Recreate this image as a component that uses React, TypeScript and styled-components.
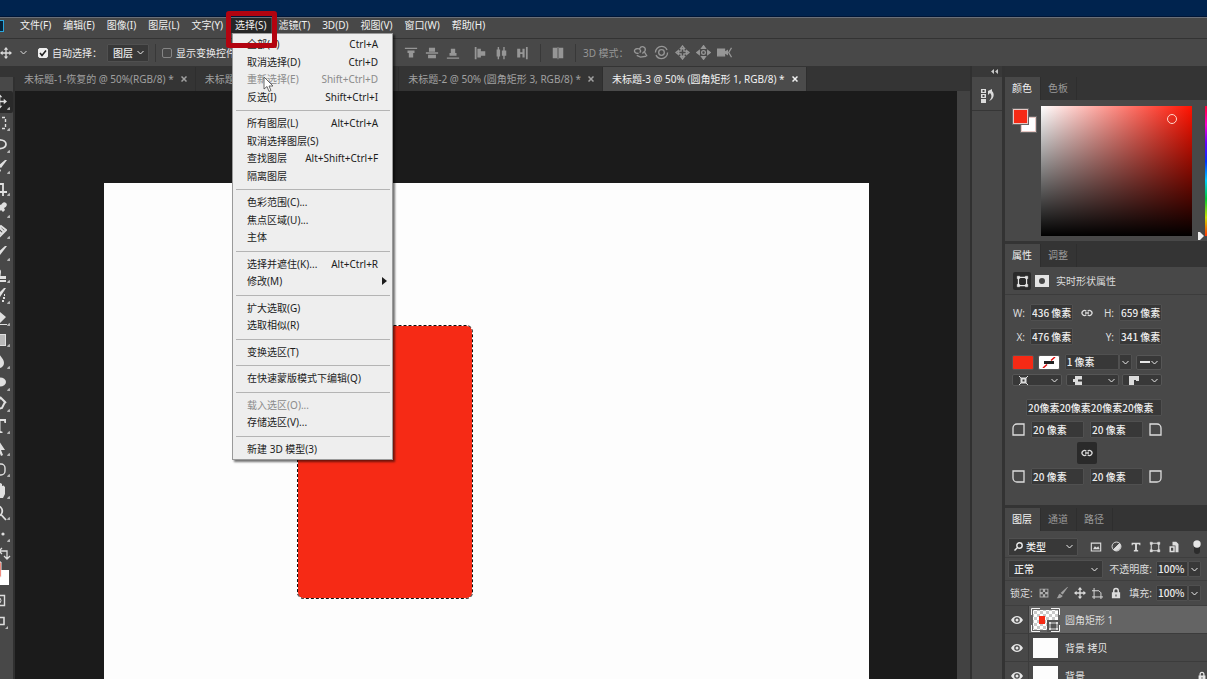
import React from "react";
import styled, { createGlobalStyle, css } from "styled-components";

const c = {
  panel: "#484848",
  strip: "#343434",
  field: "#383838",
  line: "#3a3a3a",
  text: "#dcdcdc",
  dim: "#969696",
  red: "#f62a15",
};

const GlobalStyle = createGlobalStyle`
  *, *::before, *::after { box-sizing: border-box; }
  html, body, #root { height: 100%; }
  body { margin: 0; overflow: hidden; background: #1b1b1b; }
  body, button, input, select {
    font-family: "Noto Sans", "Noto Sans CJK SC", sans-serif;
    font-size: 10px;
    line-height: 14px;
    color: ${c.text};
  }
  button, input, select { margin: 0; padding: 0; border: 0; background: none; border-radius: 0; outline: 0; }
  svg { display: block; flex: none; }
`;

const Window = styled.div`
  height: 100vh;
  display: flex;
  flex-direction: column;
  overflow: hidden;
  white-space: nowrap;
`;

const DesktopStrip = styled.div`
  flex: none;
  height: 17px;
  background: #00234e;
  border-bottom: 1px solid #001536;
`;

const MenuBar = styled.nav`
  flex: none;
  display: flex;
  align-items: flex-start;
  gap: 4px;
  height: 22px;
  padding-right: 8px;
  background: ${c.panel};
  border-top: 1px solid #6a6f78;
  border-bottom: 1px solid #333;
`;

const AppMark = styled.div`
  width: 12px;
  height: 16px;
  display: flex;
  align-items: center;
`;

const MenuEntry = styled.div`
  position: relative;
`;

const MenuTitle = styled.button<{ $open?: boolean }>`
  display: block;
  height: 15px;
  padding: 0 4px 2px;
  color: #f0f0f0;
  background: ${(p) => (p.$open ? "#262626" : "transparent")};
`;

const Highlight = styled.div`
  position: absolute;
  inset: -7px -6px -15px -5px;
  z-index: 12;
  border: 5px solid #b30410;
  border-radius: 3px;
  pointer-events: none;
`;

const Popup = styled.div`
  position: absolute;
  top: 100%;
  left: 1px;
  z-index: 10;
  width: 161px;
  height: 427px;
  display: flex;
  flex-direction: column;
  padding: 2px 1px 1px;
  background: #eeeeee;
  border: 1px solid #9a9a9a;
  box-shadow: 2px 2px 2px rgba(0, 0, 0, 0.55);
`;

const PopupRow = styled.button`
  flex: 1;
  min-height: 0;
  display: flex;
  align-items: center;
  justify-content: space-between;
  padding: 0 13px 1px;
  color: #1c1c1c;
  text-align: left;
  &:disabled { color: #8b8b8b; }
`;

const SubmenuRow = styled(PopupRow)`
  padding-right: 4px;
`;

const PopupRule = styled.hr`
  flex: none;
  width: 154px;
  height: 9px;
  margin: 0 auto;
  border: 0;
  background: linear-gradient(#b4b4b4, #b4b4b4) 0 4px / 100% 1px no-repeat;
`;

const OptionsBar = styled.div`
  flex: none;
  display: flex;
  align-items: center;
  height: 27px;
  background: ${c.panel};
`;

const OptionGroup = styled.div<{ $dim?: boolean; $gap?: number; $left?: number }>`
  display: flex;
  align-items: center;
  gap: ${(p) => p.$gap ?? 0}px;
  margin-left: ${(p) => p.$left ?? 0}px;
  color: ${(p) => (p.$dim ? c.dim : c.text)};
`;

const CheckLabel = styled.label`
  display: flex;
  align-items: center;
  gap: 4px;
  color: #ececec;
`;

const Check = styled.input`
  appearance: none;
  width: 10px;
  height: 10px;
  border: 1px solid #858585;
  border-radius: 2px;
  &:checked {
    border-color: #eee;
    background: #eee url("data:image/svg+xml,%3Csvg xmlns='http://www.w3.org/2000/svg' viewBox='0 0 8 8'%3E%3Cpath d='M1 4l2 2.500 4-5' fill='none' stroke='%23222' stroke-width='1.600'/%3E%3C/svg%3E");
  }
`;

const Divider = styled.span`
  width: 1px;
  height: 18px;
  background: #383838;
`;

const IconButton = styled.button<{ $w?: number; $h?: number; $on?: boolean }>`
  flex: none;
  display: flex;
  align-items: center;
  justify-content: center;
  width: ${(p) => p.$w ?? 20}px;
  height: ${(p) => p.$h ?? 20}px;
  color: inherit;
  border-radius: 2px;
  background: ${(p) => (p.$on ? "#2a2a2a" : "transparent")};
`;

const fieldLook = css`
  background: ${c.field};
  border: 1px solid #505050;
  border-radius: 1px;
  color: #ececec;
`;

const SelectBox = styled.div<{ $w: number; $h?: number }>`
  ${fieldLook}
  flex: none;
  display: flex;
  align-items: center;
  width: ${(p) => p.$w}px;
  height: ${(p) => p.$h ?? 18}px;
  padding: 0 4px 0 5px;
  select {
    flex: 1;
    min-width: 0;
    appearance: none;
    color: #ececec;
    font-weight: 500;
  }
`;

const Stepper = styled.button`
  ${fieldLook}
  display: flex;
  align-items: center;
  justify-content: center;
  width: 13px;
  height: 16px;
`;

const Workspace = styled.div`
  flex: 1;
  min-height: 0;
  display: flex;
  background: ${c.strip};
`;

const ToolRail = styled.div`
  flex: none;
  width: 15px;
  display: flex;
  flex-direction: column;
  align-items: flex-end;
  overflow: hidden;
  margin-top: 11px;
  padding: 14px 0 0;
  color: #e0e0e0;
  background: ${c.panel};
  border-right: 2px solid #303030;
`;

const ToolList = styled.div`
  flex: none;
  display: grid;
  grid-auto-rows: 1fr;
  width: 28px;
  height: 454px;
`;

const Tool = styled.button<{ $on?: boolean }>`
  display: flex;
  align-items: center;
  justify-content: center;
  padding-left: 3px;
  color: inherit;
  border-radius: 2px;
  background: ${(p) => (p.$on ? "#2a2a2a" : "transparent")};
  &::after {
    content: "";
    align-self: flex-end;
    margin-bottom: 3px;
    border: 2px solid;
    border-width: 1px 2px 2px 1px;
    border-color: transparent #b4b4b4 #b4b4b4 transparent;
  }
`;

const Editor = styled.main`
  flex: 1;
  min-width: 0;
  display: flex;
  flex-direction: column;
`;

const Tabs = styled.div`
  flex: none;
  display: flex;
  height: 25px;
  padding-top: 1px;
`;

const DocTab = styled.div<{ $active?: boolean }>`
  flex: none;
  display: flex;
  align-items: center;
  gap: 7px;
  padding: 0 7px 0 9px;
  color: ${(p) => (p.$active ? "#f2f2f2" : "#a0a0a0")};
  background: ${(p) => (p.$active ? "#4b4b4b" : "transparent")};
  border-right: 1px solid #2e2e2e;
`;

const EditorBody = styled.div`
  flex: 1;
  min-height: 0;
  display: flex;
`;

const Pasteboard = styled.div`
  flex: 1;
  display: flex;
  overflow: hidden;
  padding: 92px 88px 0 89px;
  background: #1b1b1b;
`;

const Artboard = styled.div`
  position: relative;
  flex: 1;
  background: #fdfdfd;
`;

const Shape = styled.svg`
  position: absolute;
  left: 193px;
  top: 142px;
`;

const ScrollTrack = styled.div`
  flex: none;
  width: 13px;
  background: #424242;
`;

const IconDock = styled.aside`
  flex: none;
  width: 32px;
  display: flex;
  flex-direction: column;
  border-left: 2px solid #303030;
  background: ${c.panel};
`;

const DockHandle = styled.div`
  flex: none;
  display: flex;
  justify-content: flex-end;
  align-items: center;
  height: 11px;
  padding-right: 4px;
  color: #c8c8c8;
  background: #383838;
`;

const DockItem = styled.div`
  display: flex;
  justify-content: center;
  height: 34px;
  padding-top: 9px;
  border-bottom: 1px solid #363636;
`;

const PanelColumn = styled.aside`
  flex: none;
  width: 205px;
  display: flex;
  flex-direction: column;
  overflow: hidden;
  padding-top: 11px;
  border-left: 3px solid #333;
  background: ${c.strip};
`;

const Panel = styled.section<{ $grow?: boolean }>`
  flex: ${(p) => (p.$grow ? "1 0 auto" : "none")};
  margin-bottom: 3px;
  background: ${c.panel};
`;

const PanelTabs = styled.div`
  display: flex;
  height: 23px;
  background: ${c.strip};
`;

const PanelTab = styled.button<{ $active?: boolean }>`
  padding: 0 8px 2px 7px;
  color: ${(p) => (p.$active ? "#f2f2f2" : "#9a9a9a")};
  background: ${(p) => (p.$active ? c.panel : "transparent")};
  border-right: 1px solid #2e2e2e;
`;

const ColorBody = styled.div`
  display: flex;
  height: 141px;
  padding: 6px 0 5px 8px;
`;

const Swatches = styled.div`
  flex: none;
  display: grid;
  grid-template: 8px 7px 8px / 8px 7px 8px;
  width: 28px;
  padding-top: 3px;
`;

const Swatch = styled.button<{ $color: string; $back?: boolean }>`
  grid-area: ${(p) => (p.$back ? "2 / 2 / 4 / 4" : "1 / 1 / 3 / 3")};
  z-index: ${(p) => (p.$back ? 0 : 1)};
  background: ${(p) => p.$color};
  border: 1px solid #e8c8c4;
  box-shadow: 0 0 0 1px #666;
`;

const Field = styled.div`
  position: relative;
  flex: none;
  width: 151px;
  background: linear-gradient(rgba(0, 0, 0, 0), #000), linear-gradient(90deg, #fff, #ff1200);
  &::after {
    content: "";
    position: absolute;
    left: 126px;
    top: 8px;
    width: 10px;
    height: 10px;
    border: 1px solid #ffd8cc;
    border-radius: 50%;
  }
`;

const HueSlider = styled.div`
  flex: none;
  display: flex;
  align-items: flex-end;
  margin-left: 6px;
  color: #f0f0f0;
  svg { margin-bottom: -4px; }
`;

const HueBar = styled.div`
  width: 14px;
  height: 100%;
  margin-left: 1px;
  background: linear-gradient(#f03, #f0c, #60f, #03f, #0cf, #0c3, #cd0, #f30);
`;

const PanelTitle = styled.div`
  display: flex;
  align-items: center;
  height: 28px;
  padding: 1px 0 0 8px;
  gap: 3px;
  border-bottom: 1px solid #3c3c3c;
  color: #e4e4e4;
`;

const PropBody = styled.div`
  display: flex;
  flex-direction: column;
  padding: 9px 45px 20px 7px;
`;

const Row = styled.div<{ $h: number; $gap?: number; $mb?: number; $justify?: string }>`
  display: flex;
  align-items: center;
  justify-content: ${(p) => p.$justify ?? "space-between"};
  height: ${(p) => p.$h}px;
  gap: ${(p) => p.$gap ?? 0}px;
  margin-bottom: ${(p) => p.$mb ?? 0}px;
`;

const Labelled = styled.label<{ $w: number }>`
  display: flex;
  align-items: center;
  justify-content: flex-end;
  gap: 5px;
  width: ${(p) => p.$w}px;
`;

const TextField = styled.input<{ $w: number; $h?: number }>`
  && {
    ${fieldLook}
    flex: none;
    width: ${(p) => p.$w}px;
    height: ${(p) => p.$h ?? 17}px;
    padding: 0 0 1px 1px;
    font-family: "Noto Sans CJK SC", sans-serif;
    font-weight: 500;
  }
`;

const Chip = styled.button<{ $w: number; $h: number; $bg?: string }>`
  display: flex;
  align-items: center;
  justify-content: space-between;
  width: ${(p) => p.$w}px;
  height: ${(p) => p.$h}px;
  padding: 0 3px;
  border: 1px solid #565656;
  border-radius: 2px;
  color: #e8e8e8;
  background: ${(p) => p.$bg ?? c.field};
`;

const Joined = styled.div`
  display: flex;
  align-items: center;
`;

const LayerTools = styled.div<{ $h: number; $top?: number }>`
  display: flex;
  align-items: center;
  height: ${(p) => p.$h}px;
  padding: ${(p) => p.$top ?? 0}px 6px 0 3px;
  border-bottom: 1px solid #3e3e3e;
  color: #dadada;
`;

const Spacer = styled.span`
  flex: 1;
`;

const LayerRow = styled.div<{ $active?: boolean }>`
  display: flex;
  align-items: center;
  height: 28px;
  border-bottom: 1px solid #3c3c3c;
  color: #e6e6e6;
  background: ${(p) =>
    p.$active ? "linear-gradient(90deg, #484848 23px, #646464 23px)" : c.panel};
`;

const Eye = styled.button`
  display: flex;
  align-items: center;
  justify-content: center;
  width: 24px;
  height: 100%;
  color: inherit;
  border-right: 1px solid #3c3c3c;
`;

const Thumb = styled.span`
  flex: none;
  width: 25px;
  height: 20px;
  margin: 0 7px 0 4px;
  background: #fdfdfd;
`;

const Pointer = styled.svg`
  position: absolute;
  left: 32px;
  top: 58px;
  z-index: 13;
  pointer-events: none;
`;

type G = { w?: number; h?: number; vb?: string; children: React.ReactNode; sw?: number };
const Line = ({ w = 14, h = 14, vb = "0 0 16 16", sw = 1.4, children }: G) => (
  <svg width={w} height={h} viewBox={vb} fill="none" stroke="currentColor" strokeWidth={sw} aria-hidden>
    {children}
  </svg>
);
const Solid = ({ w = 14, h = 14, vb = "0 0 16 16", children }: G) => (
  <svg width={w} height={h} viewBox={vb} fill="currentColor" aria-hidden>
    {children}
  </svg>
);

const Chevron = () => (
  <Line w={7} h={5} vb="0 0 7 5" sw={1}>
    <path d="M.5 1l3 3 3-3" />
  </Line>
);
const Close = () => (
  <Line w={6} h={6} vb="0 0 6 6" sw={1.5}>
    <path d="M.5.5l5 5M5.500.5l-5 5" />
  </Line>
);
const Move = ({ s = 12 }: { s?: number }) => (
  <Solid w={s} h={s}>
    <path d="M8 0l3 3.500H8.900v3.600h3.600V5L16 8l-3.500 3V8.900H8.900v3.600H11L8 16l-3-3.500h2.100V8.900H3.500V11L0 8l3.500-3v2.100h3.600V3.500H5z" />
  </Solid>
);
const Link = () => (
  <Line w={12} h={8} vb="0 0 12 8" sw={1.3}>
    <path d="M5.300 2.200A2.500 2.500 0 1 0 5.300 5.800M6.700 2.200A2.500 2.500 0 1 1 6.700 5.800M4 4h4" />
  </Line>
);
const Transform = ({ s = 12 }: { s?: number }) => (
  <Line w={s} h={s} sw={1.5}>
    <path d="M3 3h10v10H3z" />
    <path d="M1.500 1.500h3v3h-3zM11.500 1.500h3v3h-3zM1.500 11.500h3v3h-3zM11.500 11.500h3v3h-3z" fill="currentColor" strokeWidth={0.6} />
  </Line>
);
const LockGlyph = ({ s = 11 }: { s?: number }) => (
  <Solid w={s} h={s}>
    <path d="M4 7V5a4 4 0 0 1 8 0v2h1.500v8h-11V7zm2 0h4V5a2 2 0 0 0-4 0zm1.200 3v2.500h1.600V10z" fillRule="evenodd" />
  </Solid>
);
const EyeGlyph = () => (
  <Solid w={12} h={10} vb="0 0 12 10">
    <path d="M0 5c3-5.300 9-5.300 12 0-3 5.300-9 5.300-12 0zm6-2.800a2.800 2.800 0 1 0 0 5.600 2.800 2.800 0 0 0 0-5.600z" fillRule="evenodd" />
    <circle cx="6" cy="5" r="1.500" />
  </Solid>
);
const Corner = ({ turn }: { turn: number }) => (
  <Line w={13} h={13} vb="0 0 13 13" sw={1.3}>
    <path d="M1 12V5a4 4 0 0 1 4-4h7v11z" transform={`rotate(${turn} 6.500 6.500)`} />
  </Line>
);

const alignV = [
  <path key="a" d="M1 2h14v1.500H1zM4 5h8v3H4zM5.500 8h5v5h-5z" />,
  <path key="b" d="M4.500 2h7v4.500h-7zM1 7.200h14v1.600H1zM3.500 10h9v4h-9z" />,
  <path key="c" d="M5.500 3h5v5h-5zM4 8h8v3H4zM1 13h14v1.500H1z" />,
];
const alignH = [
  <path key="a" d="M2 1h2v14H2zM5 3h4v10H5zM9 6h5v5H9z" />,
  <path key="b" d="M4.200 1h1.600v14H4.200zM3 4h4v8H3zM10.600 1h1.600v14h-1.600zM9 5h5v6H9z" />,
  <path key="c" d="M12.500 1h2v14h-2zM8.500 3H11v10H8.500zM6 7h3v2H6zM2.500 3H6v10H2.500z" />,
];

const modes3d = [
  <path key="a" d="M6 9C1 9 0 5 4 4s5 3 3 4M7 4c2-4 7-2 6 2l-3 3M4 11l4 2 6-1M12 7l3 5" />,
  <g key="b"><circle cx="8" cy="8" r="6.500" strokeDasharray="17 3" /><circle cx="8" cy="8" r="3" /></g>,
  <path key="c" d="M8 1l2 2.500H6zM8 15l2-2.500H6zM1 8l2.500-2v4zM15 8l-2.500-2v4zM6.500 4v2.500H4v3h2.500V12h3V9.500H12v-3H9.500V4z" />,
  <g key="d"><circle cx="8" cy="8" r="2" /><path d="M8 .8l2 2.700H6zM8 15.200l2-2.700H6zM.8 8l2.700-2v4zM15.200 8l-2.700-2v4z" fill="currentColor" /></g>,
  <g key="e"><path d="M.5 4.500H8v7H.5zM8 8l3-2v4z" fill="currentColor" /><path d="M15.500 3l-3 5 3 5" /></g>,
];

const tools: [string, React.ReactNode][] = [
  ["移动", <Move key="i" s={15} />],
  ["矩形选框", <Line key="i" w={16} h={16}><path d="M1.500 3v10.500h13V2.500h-13z" strokeDasharray="3 2" /></Line>],
  ["套索", <Line key="i" w={16} h={16} sw={1.7}><path d="M2 13c4-2 13 0 13-6 0-5-12-6-13 0-.5 3 3 3 3 5" /></Line>],
  ["快速选择", <Solid key="i" w={16} h={16}><path d="M16 1L10 9 7 7l7-6zM6 8l4 3c-1 4-5 4-9 4 3-2 2-6 5-7z" /></Solid>],
  ["裁剪", <Line key="i" w={16} h={16} sw={1.8}><path d="M4 0v12h12M0 4h12v12" /></Line>],
  ["吸管", <Solid key="i" w={16} h={16}><path d="M15 1c2 2 0 4-2 5l1 2-2 2-2-2-6 6-3 1 1-3 6-6-2-2 2-2 2 1c1-2 3-4 5-2z" /></Solid>],
  ["污点修复", <Line key="i" w={16} h={16} sw={2}><path d="M3 9l7-7 5 4-8 8zM6 6l5 4M9 4l4 4" /></Line>],
  ["画笔", <Solid key="i" w={16} h={16}><path d="M16 1L9 10 6 8l8-7zM5 9l4 3c-2 3-5 3-8 2 2-1 2-4 4-5z" /></Solid>],
  ["图章", <Solid key="i" w={16} h={16}><path d="M6 2a3 3 0 0 1 4 3l-.5 4H15v3H1V9h5zM1 13h14v2H1z" /></Solid>],
  ["历史画笔", <Solid key="i" w={16} h={16}><path d="M15 0L9 9 6 7l7-7zM5 8l4 3c-2 3-5 3-8 2 2-1 2-4 4-5z" /><path d="M14 6v2h-1V6zM12 9h2v2h-2zM13 12h-2v2h2z" /></Solid>],
  ["橡皮擦", <Solid key="i" w={16} h={16}><path d="M9 2l6 5-6 6H4L1 10zM1 14h15v1H1z" /></Solid>],
  ["渐变", <Solid key="i" w={16} h={16}><path d="M0 2h15v12H0zM1 3v10h13V3z" fillRule="evenodd" /><path d="M5 3h9v10H5z" opacity=".75" /></Solid>],
  ["模糊", <Solid key="i" w={16} h={16}><path d="M8 1c3 4 5 6 5 9a5 5 0 0 1-10 0c0-3 2-5 5-9z" /></Solid>],
  ["减淡", <Solid key="i" w={16} h={16}><ellipse cx="9" cy="7" rx="6" ry="4.500" /><path d="M4 9l2 2-4 4H0z" /></Solid>],
  ["钢笔", <Line key="i" w={16} h={16} sw={2}><path d="M3 14l2-9 5-3 4 4-3 6zM9 1l6 6M3 14l5-5" /></Line>],
  ["文字", <Solid key="i" w={16} h={16}><path d="M1 1h14v4h-1.500L13 3H9.500v10l2 .7V15h-7v-1.300l2-.7V3H3l-.5 2H1z" /></Solid>],
  ["路径选择", <Solid key="i" w={16} h={16}><path d="M8 1l6 9h-4l2 5-2 1-2-5-3 3z" /></Solid>],
  ["圆角矩形", <Line key="i" w={16} h={16}><rect x="1" y="3" width="13" height="11" rx="4" /></Line>],
  ["抓手", <Solid key="i" w={16} h={16}><path d="M5 15L1 9l1-1 3 2V3l1.500-1L8 3V1l1.500-1L11 1v2l1.500-.5L14 4v7l-2 4z" /></Solid>],
  ["缩放", <Line key="i" w={16} h={16} sw={1.8}><circle cx="6.500" cy="6" r="4.800" /><path d="M10 9.500l5 5.500" /></Line>],
  ["更多工具", <Solid key="i" w={16} h={16}><circle cx="2" cy="8" r="1.500" /><circle cx="7" cy="8" r="1.500" /><circle cx="12" cy="8" r="1.600" /></Solid>],
];

type Item = { t: string; k?: string; off?: boolean; sub?: boolean };
const selectMenu: Item[][] = [
  [
    { t: "全部(A)", k: "Ctrl+A" },
    { t: "取消选择(D)", k: "Ctrl+D" },
    { t: "重新选择(E)", k: "Shift+Ctrl+D", off: true },
    { t: "反选(I)", k: "Shift+Ctrl+I" },
  ],
  [
    { t: "所有图层(L)", k: "Alt+Ctrl+A" },
    { t: "取消选择图层(S)" },
    { t: "查找图层", k: "Alt+Shift+Ctrl+F" },
    { t: "隔离图层" },
  ],
  [{ t: "色彩范围(C)..." }, { t: "焦点区域(U)..." }, { t: "主体" }],
  [{ t: "选择并遮住(K)...", k: "Alt+Ctrl+R" }, { t: "修改(M)", sub: true }],
  [{ t: "扩大选取(G)" }, { t: "选取相似(R)" }],
  [{ t: "变换选区(T)" }],
  [{ t: "在快速蒙版模式下编辑(Q)" }],
  [{ t: "载入选区(O)...", off: true }, { t: "存储选区(V)..." }],
  [{ t: "新建 3D 模型(3)" }],
];

const menus = [
  "文件(F)", "编辑(E)", "图像(I)", "图层(L)", "文字(Y)", "选择(S)",
  "滤镜(T)", "3D(D)", "视图(V)", "窗口(W)", "帮助(H)",
];

const docs = [
  "未标题-1-恢复的 @ 50%(RGB/8) *",
  "未标题-1 @ 50% (圆角矩形 1, RGB/8) *",
  "未标题-2 @ 50% (圆角矩形 3, RGB/8) *",
  "未标题-3 @ 50% (圆角矩形 1, RGB/8) *",
];

const SelectMenu = () => (
  <Popup role="menu">
    {selectMenu.map((group, g) => (
      <React.Fragment key={g}>
        {g > 0 && <PopupRule />}
        {group.map((it) =>
          it.sub ? (
            <SubmenuRow key={it.t} role="menuitem">
              {it.t}
              <Solid w={5} h={8} vb="0 0 5 8"><path d="M0 0l5 4-5 4z" /></Solid>
            </SubmenuRow>
          ) : (
            <PopupRow key={it.t} role="menuitem" disabled={it.off}>
              <span>{it.t}</span>
              {it.k && <span>{it.k}</span>}
            </PopupRow>
          )
        )}
      </React.Fragment>
    ))}
  </Popup>
);

const Dropdown = ({ w, h, label, value, lead }: { w: number; h?: number; label: string; value: string; lead?: React.ReactNode }) => (
  <SelectBox $w={w} $h={h}>
    {lead}
    <select aria-label={label} defaultValue={value}>
      <option>{value}</option>
    </select>
    <Chevron />
  </SelectBox>
);

const ColorPanel = () => (
  <Panel>
    <PanelTabs>
      <PanelTab $active>颜色</PanelTab>
      <PanelTab>色板</PanelTab>
    </PanelTabs>
    <ColorBody>
      <Swatches>
        <Swatch $color={c.red} aria-label="前景色" />
        <Swatch $color="#fff" $back aria-label="背景色" />
      </Swatches>
      <Field />
      <HueSlider>
        <Solid w={6} h={8} vb="0 0 6 8"><path d="M0 0h2l4 4-4 4H0z" /></Solid>
        <HueBar />
      </HueSlider>
    </ColorBody>
  </Panel>
);

const PropertiesPanel = () => (
  <Panel>
    <PanelTabs>
      <PanelTab $active>属性</PanelTab>
      <PanelTab>调整</PanelTab>
    </PanelTabs>
    <PanelTitle>
      <IconButton $w={18} $h={18} $on aria-label="形状"><Transform s={13} /></IconButton>
      <IconButton $w={16} $h={18} aria-label="蒙版">
        <Solid w={14} h={12} vb="0 0 14 12"><path d="M0 0h14v12H0zM7 3a3 3 0 1 0 0 6 3 3 0 0 0 0-6z" fillRule="evenodd" /></Solid>
      </IconButton>
      <OptionGroup $left={3}>实时形状属性</OptionGroup>
    </PanelTitle>
    <PropBody>
      <Row $h={17} $mb={7}>
        <Labelled $w={61}>W:<TextField $w={43} defaultValue="436 像素" /></Labelled>
        <Link />
        <Labelled $w={61}>H:<TextField $w={43} defaultValue="659 像素" /></Labelled>
      </Row>
      <Row $h={17} $mb={9}>
        <Labelled $w={61}>X:<TextField $w={43} defaultValue="476 像素" /></Labelled>
        <Labelled $w={61}>Y:<TextField $w={43} defaultValue="341 像素" /></Labelled>
      </Row>
      <Row $h={16} $mb={4}>
        <Chip $w={22} $h={15} $bg={c.red} aria-label="填充" />
        <Chip $w={22} $h={15} $bg="#fff" aria-label="描边">
          <svg width="14" height="11" viewBox="0 0 14 11">
            <path d="M1 11l4-3.500M9 3.500L13 0" stroke="#e01010" strokeWidth="1.500" />
            <path d="M2 4h10v3H2z" fill="#222" />
          </svg>
        </Chip>
        <Joined>
          <TextField $w={54} $h={16} defaultValue="1 像素" aria-label="描边宽度" />
          <Stepper aria-label="宽度列表"><Chevron /></Stepper>
        </Joined>
        <Chip $w={26} $h={15} aria-label="描边类型">
          <Solid w={10} h={2} vb="0 0 10 2"><path d="M0 0h10v2H0z" /></Solid>
          <Chevron />
        </Chip>
      </Row>
      <Row $h={12} $mb={13}>
        <Chip $w={50} $h={12} aria-label="对齐">
          <OptionGroup $left={3}>
            <Line w={9} h={9} vb="0 0 9 9" sw={2}><path d="M2.500 2.500h4v4h-4z" /><path d="M0 0l2 2M9 0L7 2M0 9l2-2M9 9L7 7" strokeWidth="1" /></Line>
          </OptionGroup>
          <Chevron />
        </Chip>
        <Chip $w={53} $h={12} aria-label="端点">
          <OptionGroup $left={3}>
            <Solid w={9} h={9} vb="0 0 9 9"><path d="M2 0h7v3.500H5v2h4V9H2V6H0V3h2z" /></Solid>
          </OptionGroup>
          <Chevron />
        </Chip>
        <Chip $w={40} $h={12} aria-label="角点">
          <OptionGroup $left={3}>
            <Solid w={10} h={9} vb="0 0 10 9"><path d="M0 0h10v5H7V4H5v5H0z" /></Solid>
          </OptionGroup>
          <Chevron />
        </Chip>
      </Row>
      <Row $h={17} $mb={5} $justify="flex-end">
        <TextField $w={136} defaultValue="20像素20像素20像素20像素" aria-label="圆角半径" />
      </Row>
      <Row $h={17} $mb={4}>
        <Corner turn={0} />
        <TextField $w={53} defaultValue="20 像素" aria-label="左上角半径" />
        <TextField $w={53} defaultValue="20 像素" aria-label="右上角半径" />
        <Corner turn={90} />
      </Row>
      <Row $h={22} $mb={4} $justify="center">
        <IconButton $w={20} $h={22} $on aria-label="链接圆角"><Link /></IconButton>
      </Row>
      <Row $h={17}>
        <Corner turn={270} />
        <TextField $w={53} defaultValue="20 像素" aria-label="左下角半径" />
        <TextField $w={53} defaultValue="20 像素" aria-label="右下角半径" />
        <Corner turn={180} />
      </Row>
    </PropBody>
  </Panel>
);

const Percent = ({ label }: { label: string }) => (
  <Joined>
    <OptionGroup as="label" $gap={4}>
      {label}
      <TextField $w={32} $h={16} defaultValue="100%" />
    </OptionGroup>
    <Stepper aria-label="滑块"><Chevron /></Stepper>
  </Joined>
);

const ShapeThumb = () => (
  <svg width="29" height="24" viewBox="0 0 29 24">
    <defs>
      <pattern id="checker" width="6" height="6" patternUnits="userSpaceOnUse">
        <path d="M0 0h6v6H0z" fill="#fff" />
        <path d="M0 0h3v3H0zM3 3h3v3H3z" fill="#c9c9c9" />
      </pattern>
    </defs>
    <path d="M2 2h25v20H2z" fill="url(#checker)" />
    <path d="M8 8h6v8H8z" fill={c.red} />
    <path d="M16 12h13v12H16z" fill="#555" />
    <path d="M19 15h7v6h-7z" fill="none" stroke="#ddd" />
    <path d="M18 14h2v2h-2zM25 14h2v2h-2zM18 20h2v2h-2zM25 20h2v2h-2z" fill="#ddd" />
    <path d="M.5 7V.5H9M20 .5h8.500V7M.5 17v6.500H9M20 23.500h8.500V17" fill="none" stroke="#f4f4f4" />
  </svg>
);

const LayersPanel = () => (
  <Panel $grow>
    <PanelTabs>
      <PanelTab $active>图层</PanelTab>
      <PanelTab>通道</PanelTab>
      <PanelTab>路径</PanelTab>
    </PanelTabs>
    <LayerTools $h={27} $top={5}>
      <Dropdown
        w={70}
        label="筛选"
        value="类型"
        lead={
          <Line w={12} h={9} vb="0 0 12 9">
            <circle cx="5.500" cy="3.500" r="2.700" />
            <path d="M3.500 5.500L.5 8.500" />
          </Line>
        }
      />
      <OptionGroup $left={8}>
        <IconButton aria-label="像素图层"><Solid w={12} h={12}><path d="M1 2h14v12H1zM2.500 3.500v9h11v-9zM4 11l2.500-4L9 9l2-2 2 4z" fillRule="evenodd" /></Solid></IconButton>
        <IconButton aria-label="调整图层"><Line w={11} h={11}><circle cx="8" cy="8" r="6.500" /><path d="M12.500 3.500a6.500 6.500 0 0 1-9 9z" fill="currentColor" /></Line></IconButton>
        <IconButton $w={19} aria-label="文字图层"><Solid w={10} h={10}><path d="M1 1h14v4h-1.500L13 3.500H9.500v9l2 .7V15h-7v-1.800l2-.7v-9H3L2.500 5H1z" /></Solid></IconButton>
        <IconButton $w={19} aria-label="形状图层"><Transform s={12} /></IconButton>
        <IconButton aria-label="智能对象"><Solid w={12} h={12}><path d="M6 1h5l3 3v11h-4V6H6zM2 7h7v8H2zM4 9v4h3V9z" fillRule="evenodd" /></Solid></IconButton>
      </OptionGroup>
      <Spacer />
      <svg width="8" height="14" viewBox="0 0 8 14"><rect x="1" width="6" height="14" rx="3" fill="#2c2c2c" /><circle cx="4" cy="4" r="3.700" fill="#e6e6e6" /></svg>
    </LayerTools>
    <LayerTools $h={23}>
      <Dropdown w={95} label="混合模式" value="正常" />
      <Spacer />
      <Percent label="不透明度:" />
    </LayerTools>
    <LayerTools $h={25}>
      <OptionGroup $left={2}>锁定:</OptionGroup>
      <OptionGroup $left={2}>
        <IconButton $w={18} aria-label="锁定透明像素"><Solid w={10} h={10}><path d="M1 1h14v14H1zM2.500 2.500v3.700h3.700V2.500zM9.800 2.500v3.700h3.700V2.500zM6.200 6.200v3.600h3.600V6.200zM2.500 9.800v3.700h3.700V9.800zM9.800 9.800v3.700h3.700V9.800z" fillRule="evenodd" opacity=".7" /></Solid></IconButton>
        <IconButton $w={18} aria-label="锁定图像像素"><Solid w={12} h={12}><path d="M16 0L9 10 6 8l9-8zM5 9l4 3c-2 3-5 3-8 3 2-2 2-5 4-6z" opacity=".6" /></Solid></IconButton>
        <IconButton $w={18} aria-label="锁定位置"><Move s={12} /></IconButton>
        <IconButton $w={18} aria-label="锁定画板"><Line w={11} h={11}><path d="M3 0v16M0 4h10l3 3v9M0 13h16" /></Line></IconButton>
        <IconButton $w={18} aria-label="锁定全部"><LockGlyph s={12} /></IconButton>
      </OptionGroup>
      <Spacer />
      <Percent label="填充:" />
    </LayerTools>
    <LayerRow $active>
      <Eye aria-label="可见性"><EyeGlyph /></Eye>
      <OptionGroup $left={2} $gap={5}><ShapeThumb />圆角矩形 1</OptionGroup>
    </LayerRow>
    <LayerRow>
      <Eye aria-label="可见性"><EyeGlyph /></Eye>
      <Thumb />
      背景 拷贝
    </LayerRow>
    <LayerRow>
      <Eye aria-label="可见性"><EyeGlyph /></Eye>
      <Thumb />
      背景
      <Spacer />
      <LockGlyph s={10} />
    </LayerRow>
  </Panel>
);

export default function App() {
  return (
    <Window>
      <GlobalStyle />
      <DesktopStrip />
      <MenuBar>
        <AppMark>
          <svg width="4" height="12" viewBox="0 0 4 12"><path d="M0 0h4v12H0z" fill="#2aa6dd" /><path d="M0 1h3v10H0z" fill="#06233a" /></svg>
        </AppMark>
        {menus.map((m) =>
          m === "选择(S)" ? (
            <MenuEntry key={m}>
              <MenuTitle $open aria-expanded>{m}</MenuTitle>
              <SelectMenu />
              <Highlight />
              <Pointer width="11" height="17" viewBox="0 0 11 17">
                <path d="M1 1v12l3-2.500 2 5 2-1-2-4.500h4z" fill="#fff" stroke="#555" strokeWidth=".9" />
              </Pointer>
            </MenuEntry>
          ) : (
            <MenuTitle key={m}>{m}</MenuTitle>
          )
        )}
      </MenuBar>

      <OptionsBar>
        <OptionGroup $gap={8}>
          <Move s={12} />
          <Chevron />
        </OptionGroup>
        <OptionGroup $left={11} $gap={5}>
          <CheckLabel><Check type="checkbox" defaultChecked />自动选择：</CheckLabel>
          <Dropdown w={42} label="自动选择" value="图层" />
        </OptionGroup>
        <OptionGroup $left={6} $gap={6}>
          <Divider />
          <CheckLabel><Check type="checkbox" />显示变换控件</CheckLabel>
        </OptionGroup>
        <OptionGroup $dim $left={165} $gap={1}>
          {alignV.map((p, i) => (
            <IconButton key={i} aria-label="垂直对齐"><Solid>{p}</Solid></IconButton>
          ))}
        </OptionGroup>
        <OptionGroup $dim $left={7} $gap={1}>
          {alignH.map((p, i) => (
            <IconButton key={i} aria-label="水平对齐"><Solid>{p}</Solid></IconButton>
          ))}
        </OptionGroup>
        <OptionGroup $dim $left={8} $gap={7}>
          <Divider />
          <IconButton aria-label="分布"><Solid><path d="M2 2h5v12H2zM9 2h5v12H9zM7.500 1h1v14h-1z" /></Solid></IconButton>
          <Divider />
          3D 模式：
        </OptionGroup>
        <OptionGroup $dim $left={2} $gap={1}>
          {modes3d.map((p, i) => (
            <IconButton key={i} aria-label="3D 模式"><Line w={15} h={15}>{p}</Line></IconButton>
          ))}
        </OptionGroup>
      </OptionsBar>

      <Workspace>
        <ToolRail>
          <ToolList>
            {tools.map(([name, icon], i) => (
              <Tool key={name} $on={i === 0} aria-label={name}>{icon}</Tool>
            ))}
          </ToolList>
          <svg width="28" height="90" viewBox="0 0 28 90">
            <path d="M15 6h7v7M17 3l-3 3 3 3M19 11l3 3 3-3" fill="none" stroke="#ddd" strokeWidth="1.300" />
            <path d="M9 25h15v15H9z" fill="#fff" />
            <path d="M1 17h15v15H1z" fill={c.red} stroke="#eee" />
            <path d="M6.500 50.500h13v10h-13z" fill="none" stroke="#ddd" strokeWidth="1.400" />
            <circle cx="13" cy="55.500" r="3" fill="none" stroke="#ddd" />
            <path d="M6 72.500h13v7h-5v3h-4v-3H6z" fill="none" stroke="#ddd" strokeWidth="1.600" />
            <path d="M23 81v3h-3z" fill="#bbb" />
          </svg>
        </ToolRail>

        <Editor>
          <Tabs>
            {docs.map((d, i) => (
              <DocTab key={d} $active={i === 3}>
                {d}
                <IconButton $w={7} $h={10} aria-label="关闭"><Close /></IconButton>
              </DocTab>
            ))}
          </Tabs>
          <EditorBody>
            <Pasteboard>
              <Artboard>
                <Shape width="176" height="274" viewBox="0 0 176 274">
                  <rect x=".5" y=".5" width="175" height="273" rx="6" fill={c.red} stroke="#fff" />
                  <rect x=".5" y=".5" width="175" height="273" rx="6" fill="none" stroke="#111" strokeDasharray="3 2" />
                </Shape>
              </Artboard>
            </Pasteboard>
            <ScrollTrack />
          </EditorBody>
        </Editor>

        <IconDock>
          <DockHandle>
            <Solid w={7} h={5} vb="0 0 7 5"><path d="M3 0v5L0 2.500zM7 0v5L4 2.500z" /></Solid>
          </DockHandle>
          <DockItem>
            <IconButton aria-label="历史记录">
              <Solid w={14} h={16} vb="0 0 14 16">
                <path d="M1 1h5v4H1zM2.500 2v2h2V2zM1 6h5v4H1zM2.500 7v2h2V7zM1 11h5v4H1z" fillRule="evenodd" />
                <path d="M8 3l4-2v2c3 3 2 8-3 10 3-3 3-6 1-8l-2 2z" />
              </Solid>
            </IconButton>
          </DockItem>
        </IconDock>

        <PanelColumn>
          <ColorPanel />
          <PropertiesPanel />
          <LayersPanel />
        </PanelColumn>
      </Workspace>
    </Window>
  );
}
